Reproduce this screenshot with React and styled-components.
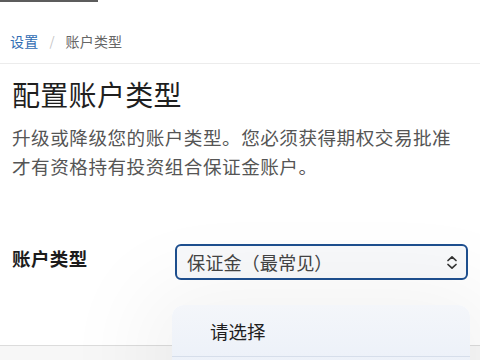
import React from 'react';
import styled, { createGlobalStyle } from 'styled-components';

const GlobalStyle = createGlobalStyle`
    html, body {
        margin: 0;
        padding: 0;
        background: #ffffff;
        overflow: hidden;
    }
    body {
        font-family: "Noto Sans CJK SC", "Noto Sans", sans-serif;
        color: #222;
    }
`;

const Page = styled.div`
    position: relative;
    width: 480px;
    height: 360px;
    overflow: hidden;
    background: #fff;
`;

const ScrollHint = styled.div`
    width: 98px;
    height: 2px;
    background: #5c5c5c;
`;

const Breadcrumb = styled.nav`
    box-sizing: border-box;
    height: 62px;
    padding: 16px 10px 0;
    display: flex;
    align-items: center;
    gap: 11px;
    font-size: 14px;
    border-bottom: 1px solid #ececec;
`;

const Crumb = styled.span`
    color: ${({ $link }) => ($link ? '#2f6cb3' : '#666')};
    letter-spacing: 0.2px;
`;

const Slash = styled.span`
    color: #c4c4c4;
    font-size: 13px;
`;

const Content = styled.div`
    padding: 0 12px;
`;

const Title = styled.h1`
    margin: 12px 0 0;
    font-size: 28px;
    line-height: 36px;
    font-weight: 400;
    color: #1f1f1f;
    letter-spacing: 0.3px;
`;

const Desc = styled.p`
    margin: 10px 0 0;
    max-width: 448px;
    font-size: 18.6px;
    line-height: 29px;
    color: #555;
    letter-spacing: 0.5px;
`;

const FormRow = styled.div`
    display: grid;
    grid-template-columns: 163px 1fr;
    margin-top: 64px;
`;

const Label = styled.label`
    font-size: 18.5px;
    line-height: 28px;
    font-weight: 700;
    color: #1c1c1c;
    letter-spacing: 0.4px;
`;

const SelectWrap = styled.div`
    position: relative;
`;

const SelectBox = styled.div`
    box-sizing: border-box;
    height: 36px;
    border: 2px solid #1e4f8f;
    border-radius: 6px;
    background: #f8f9fb;
    display: flex;
    align-items: center;
    justify-content: space-between;
    padding: 0 8px 0 10px;
    font-size: 18.2px;
    color: #444;
`;

const Menu = styled.div`
    position: absolute;
    top: 61px;
    left: -3px;
    right: -2px;
    height: 80px;
    border-radius: 12px;
    background: linear-gradient(180deg, #f4f6fa 0%, #e9eff8 100%);
    box-shadow: 0 10px 90px 30px rgba(0, 0, 0, 0.05);
    z-index: 2;
`;

const MenuItem = styled.div`
    box-sizing: border-box;
    height: 52px;
    padding-left: 38px;
    display: flex;
    align-items: center;
    font-size: 18.5px;
    color: #1f1f1f;
    border-bottom: 1px solid #d6deea;
`;

const Footer = styled.div`
    margin-top: 65px;
    height: 40px;
    border-top: 1px solid #dcdcdc;
    background: #f7f7f7;
    position: relative;
    z-index: 1;
`;

function Chevrons() {
    return (
        <svg width="12" height="15" viewBox="0 0 12 15" fill="none">
            <path d="M2 5.5 L6 1.8 L10 5.5" stroke="#333" strokeWidth="1.7" strokeLinecap="round" strokeLinejoin="round" />
            <path d="M2 9.5 L6 13.2 L10 9.5" stroke="#333" strokeWidth="1.7" strokeLinecap="round" strokeLinejoin="round" />
        </svg>
    );
}

export default function App() {
    return (
        <Page>
            <GlobalStyle />
            <ScrollHint />
            <Breadcrumb>
                <Crumb $link>设置</Crumb>
                <Slash>/</Slash>
                <Crumb>账户类型</Crumb>
            </Breadcrumb>
            <Content>
                <Title>配置账户类型</Title>
                <Desc>
                    升级或降级您的账户类型。您必须获得期权交易批准才有资格持有投资组合保证金账户。
                </Desc>
                <FormRow>
                    <Label>账户类型</Label>
                    <SelectWrap>
                        <SelectBox>
                            <span>保证金（最常见）</span>
                            <Chevrons />
                        </SelectBox>
                        <Menu>
                            <MenuItem>请选择</MenuItem>
                        </Menu>
                    </SelectWrap>
                </FormRow>
            </Content>
            <Footer />
        </Page>
    );
}
